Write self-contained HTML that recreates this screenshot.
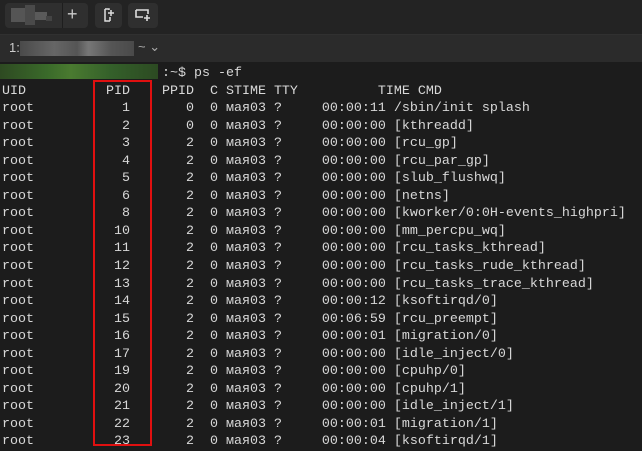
<!DOCTYPE html>
<html><head><meta charset="utf-8"><style>
body{margin:0;width:642px;height:450px;overflow:hidden;background:#1c1c1c;font-family:"Liberation Sans",sans-serif;position:relative}
.top{position:absolute;left:0;top:0;width:642px;height:34px;background:#232323}
.btn{position:absolute;top:3px;height:25px;background:#2f2f2f;border-radius:4px}
.row2{position:absolute;left:0;top:34px;width:642px;height:27px;background:#2b2b2b;border-top:1px solid #303030}
pre{margin:0;position:absolute;left:2px;top:65px;font-family:"Liberation Mono","DejaVu Sans Mono",monospace;font-size:13.33px;line-height:17.55px;color:#d8d8d8}
.box{position:absolute;left:93px;top:80px;width:55px;height:362px;border:2px solid #e01010}
</style></head><body>
<div class="top">
 <div class="btn" style="left:5px;width:83px">
  <div style="position:absolute;left:6px;top:5px;width:14px;height:14px;background:#555"></div>
  <div style="position:absolute;left:20px;top:2px;width:10px;height:20px;background:#4a4a4a"></div>
  <div style="position:absolute;left:30px;top:9px;width:12px;height:8px;background:#5a5a5a"></div>
  <div style="position:absolute;left:41px;top:13px;width:6px;height:5px;background:#444"></div>
  <div style="position:absolute;left:57px;top:0;width:1px;height:25px;background:#1e1e1e"></div>
  <div style="position:absolute;left:62px;top:1px;color:#ccc;font-size:18px">+</div>
 </div>
 <div class="btn" style="left:95px;width:27px">
  <svg width="27" height="25"><path d="M10 6h4v1M10 6v12h5M15 14v4" stroke="#ddd" stroke-width="1.5" fill="none"/><path d="M16 7v6M13 10h6" stroke="#ddd" stroke-width="1.5"/></svg>
 </div>
 <div class="btn" style="left:128px;width:30px">
  <svg width="30" height="25"><path d="M8 7h12v4M8 7v7h7" stroke="#ddd" stroke-width="1.6" fill="none"/><path d="M19 12v6M16 15h6" stroke="#ddd" stroke-width="1.6"/></svg>
 </div>
</div>
<div class="row2">
 <span style="position:absolute;left:9px;top:5px;color:#ccc;font-size:13px">1:</span>
 <div style="position:absolute;left:20px;top:6px;width:114px;height:15px;background:linear-gradient(90deg,#4a4a4a,#666 30%,#555 50%,#777 60%,#555 80%,#4a4a4a)"></div>
 <span style="position:absolute;left:138px;top:4px;color:#aaa;font-size:13px">~ ⌄</span>
</div>
<div style="position:absolute;left:0;top:64px;width:158px;height:15px;background:linear-gradient(90deg,#2e4a22,#3a6a2a 30%,#4a7a30 45%,#34602a 70%,#2c4a22)"></div>
<pre>                    :~$ ps -ef
UID          PID    PPID  C STIME TTY          TIME CMD
root           1       0  0 мая03 ?     00:00:11 /sbin/init splash
root           2       0  0 мая03 ?     00:00:00 [kthreadd]
root           3       2  0 мая03 ?     00:00:00 [rcu_gp]
root           4       2  0 мая03 ?     00:00:00 [rcu_par_gp]
root           5       2  0 мая03 ?     00:00:00 [slub_flushwq]
root           6       2  0 мая03 ?     00:00:00 [netns]
root           8       2  0 мая03 ?     00:00:00 [kworker/0:0H-events_highpri]
root          10       2  0 мая03 ?     00:00:00 [mm_percpu_wq]
root          11       2  0 мая03 ?     00:00:00 [rcu_tasks_kthread]
root          12       2  0 мая03 ?     00:00:00 [rcu_tasks_rude_kthread]
root          13       2  0 мая03 ?     00:00:00 [rcu_tasks_trace_kthread]
root          14       2  0 мая03 ?     00:00:12 [ksoftirqd/0]
root          15       2  0 мая03 ?     00:06:59 [rcu_preempt]
root          16       2  0 мая03 ?     00:00:01 [migration/0]
root          17       2  0 мая03 ?     00:00:00 [idle_inject/0]
root          19       2  0 мая03 ?     00:00:00 [cpuhp/0]
root          20       2  0 мая03 ?     00:00:00 [cpuhp/1]
root          21       2  0 мая03 ?     00:00:00 [idle_inject/1]
root          22       2  0 мая03 ?     00:00:01 [migration/1]
root          23       2  0 мая03 ?     00:00:04 [ksoftirqd/1]</pre>
<div class="box"></div>
</body></html>
